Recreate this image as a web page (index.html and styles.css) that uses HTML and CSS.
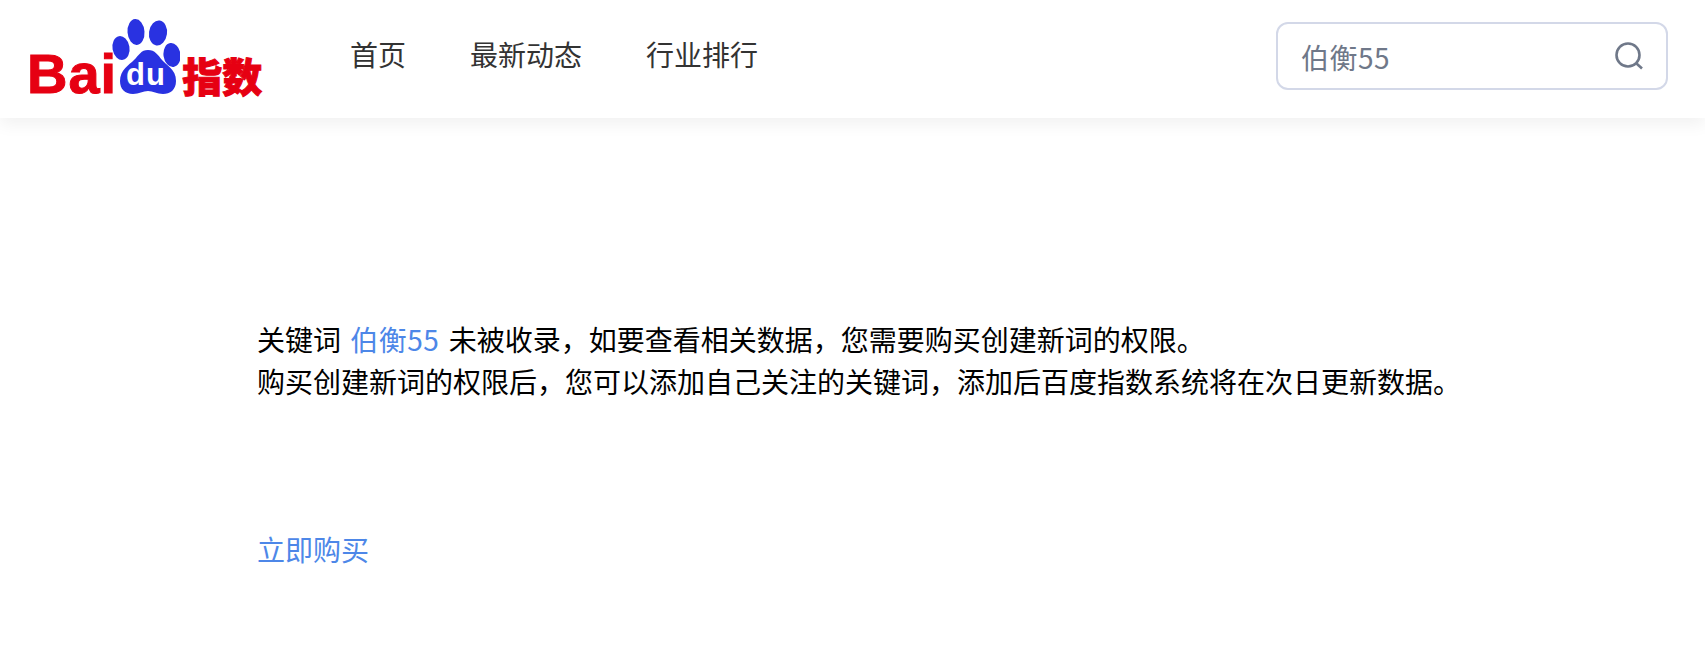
FILE: index.html
```html
<!DOCTYPE html>
<html lang="zh-CN">
<head>
    <meta charset="UTF-8">
    <meta name="viewport" content="width=device-width, initial-scale=1.0">
    <title>百度指数</title>
    <link rel="stylesheet" href="styles.css">
</head>
<body>

    <header class="header">
        <a class="logo" href="#">
            <span class="logo-bai">Bai</span>
            <svg class="logo-paw" width="70" height="78" viewBox="0 0 70 78">
                <ellipse cx="11" cy="30" rx="8.5" ry="12" transform="rotate(-10 11 30)" fill="#2932e1"/>
                <ellipse cx="26" cy="14" rx="8.5" ry="13" transform="rotate(-4 26 14)" fill="#2932e1"/>
                <ellipse cx="48" cy="15" rx="9" ry="12.5" transform="rotate(8 48 15)" fill="#2932e1"/>
                <ellipse cx="62" cy="37" rx="8.5" ry="12" transform="rotate(-8 62 37)" fill="#2932e1"/>
                <path d="M38 32c7 0 10 5 14 10s14 9 14 21c0 9-6 13-13 13-6 0-10-3-15-3s-9 3-15 3c-8 0-13-5-13-13 0-11 9-16 14-21s7-10 14-10z" fill="#2932e1"/>
                <text class="logo-du" x="36" y="67" text-anchor="middle">du</text>
            </svg>
            <span class="logo-name">指数</span>
        </a>
        <nav class="nav">
            <a href="#">首页</a>
            <a href="#">最新动态</a>
            <a href="#">行业排行</a>
        </nav>
        <div class="search">
            <span class="search-text">伯衡55</span>
            <svg class="search-icon" width="30" height="30" viewBox="0 0 30 30">
                <circle cx="14" cy="14" r="11.5" fill="none" stroke="#6f7889" stroke-width="2.6"/>
                <path d="M22.5 22.5L28 27.5" fill="none" stroke="#6f7889" stroke-width="2.6"/>
            </svg>
        </div>
    </header>

    <main class="content">
        <p class="notice">关键词 <a href="#">伯衡55</a> 未被收录，如要查看相关数据，您需要购买创建新词的权限。<br>购买创建新词的权限后，您可以添加自己关注的关键词，添加后百度指数系统将在次日更新数据。</p>
        <a class="buy" href="#">立即购买</a>
    </main>

</body>
</html>
```

FILE: styles.css
```css
body {
    margin: 0;
    background-color: #fff;
    font-family: "Noto Sans CJK SC", sans-serif;
    font-size: 28px;
    color: #000;
}

a {
    text-decoration: none;
}

.header {
    display: flex;
    align-items: center;
    height: 118px;
    padding: 0 37px 0 27px;
    background-color: #fff;
    box-shadow: 0 6px 16px rgba(0, 0, 0, 0.06);
}

.logo {
    display: flex;
    align-items: flex-end;
    width: 323px;
    height: 78px;
    margin-top: -4px;
}

.logo-bai {
    font-family: "Liberation Sans", sans-serif;
    font-weight: 700;
    font-size: 56px;
    line-height: 40px;
    letter-spacing: 1px;
    color: #e60012;
    -webkit-text-stroke: 1px #e60012;
    margin-right: -7px;
    margin-bottom: 2px;
}

.logo-paw {
    flex: none;
}

.logo-du {
    font-family: "Liberation Sans", sans-serif;
    font-weight: 700;
    font-size: 31px;
    letter-spacing: 1px;
    fill: #fff;
}

.logo-name {
    font-weight: 900;
    font-size: 40px;
    line-height: 40px;
    color: #e60012;
    -webkit-text-stroke: 1px #e60012;
    margin-left: 2px;
    margin-bottom: 1px;
}

.nav {
    display: flex;
    gap: 64px;
    line-height: 40px;
    margin-bottom: 10px;
}

.nav a {
    color: #333;
}

.search {
    display: flex;
    align-items: center;
    justify-content: space-between;
    box-sizing: border-box;
    width: 392px;
    height: 68px;
    margin-left: auto;
    margin-top: -6px;
    padding: 0 22px 0 23px;
    border: 2px solid #d3d8e8;
    border-radius: 12px;
}

.search-text {
    color: #6f7889;
    letter-spacing: 0.5px;
    margin-top: 2px;
}

.content {
    padding: 200px 0 0 257px;
}

.notice {
    margin: 0;
    line-height: 42px;
}

.notice a {
    margin: 0 3px;
    letter-spacing: 0.5px;
}

.notice a,
.buy {
    color: #4d87e8;
}

.buy {
    display: block;
    margin-top: 126px;
    line-height: 42px;
}
```
